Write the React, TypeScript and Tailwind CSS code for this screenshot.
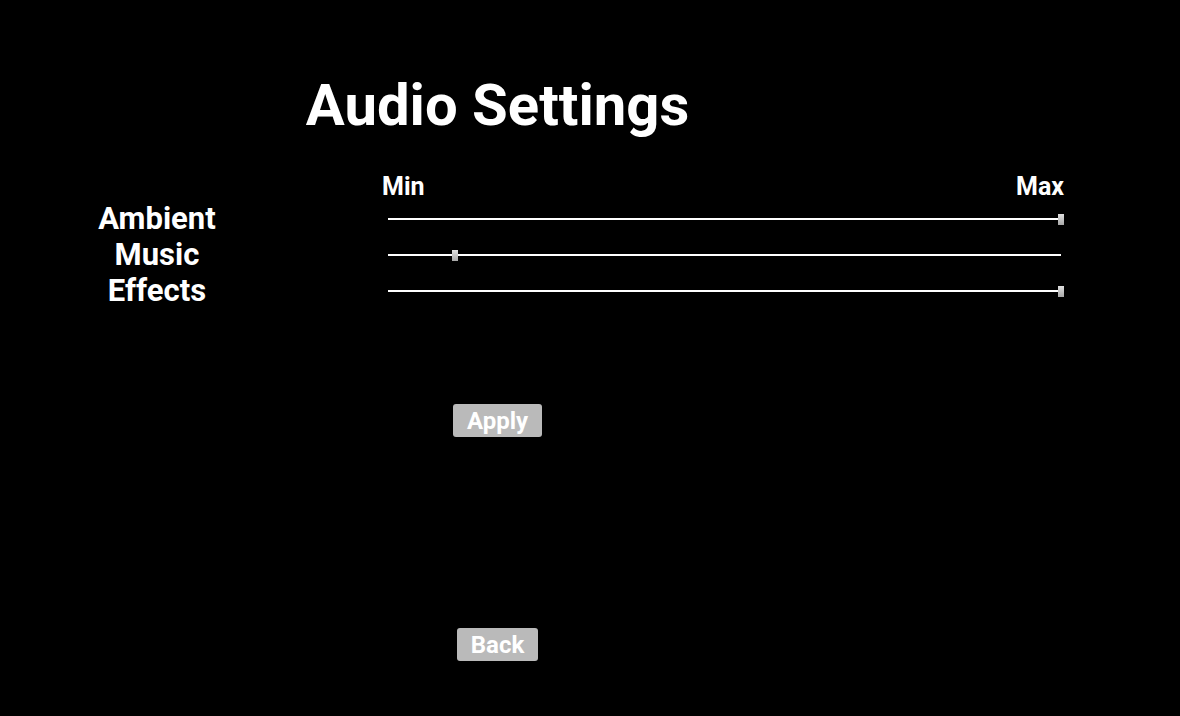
import React from 'react'

const sliders = [
  { label: 'Ambient', value: 1 },
  { label: 'Music', value: 0.1 },
  { label: 'Effects', value: 1 },
]

function Slider({ value }: { value: number }) {
  return (
    <div className="relative shrink-0 ml-[74px] w-[673px] h-[11px] flex items-center">
      <div className="w-full h-[2px] bg-white" />
      <div
        className="absolute top-0 w-[6px] h-[11px] bg-gradient-to-b from-[#e0e0e0] to-[#a8a8a8] -translate-x-1/2"
        style={{ left: `${value * 100}%` }}
      />
    </div>
  )
}

export default function App() {
  return (
    <div className="w-[1180px] h-[716px] bg-black text-white font-['Roboto',sans-serif] font-bold overflow-hidden">
      <div className="w-[995px] flex flex-col items-center">
        <h1 className="mt-[76px] text-[58px] leading-none">Audio Settings</h1>
        <div className="w-full mt-[40px]">
          <div className="ml-[382px] w-[682px] flex justify-between text-[25px] leading-none">
            <span>Min</span>
            <span>Max</span>
          </div>
          <div className="mt-[2px]">
            {sliders.map((s) => (
              <div key={s.label} className="flex items-center h-[36px]">
                <div className="w-[314px] shrink-0 text-center text-[31px] leading-[36px]">{s.label}</div>
                <Slider value={s.value} />
              </div>
            ))}
          </div>
        </div>
        <button className="mt-[95px] h-[33px] px-[13.5px] rounded-[3px] bg-[#bababa] text-white text-[24px] leading-none font-bold">
          Apply
        </button>
        <button className="mt-[191px] h-[33px] px-[13.5px] rounded-[3px] bg-[#bababa] text-white text-[24px] leading-none font-bold">
          Back
        </button>
      </div>
    </div>
  )
}
